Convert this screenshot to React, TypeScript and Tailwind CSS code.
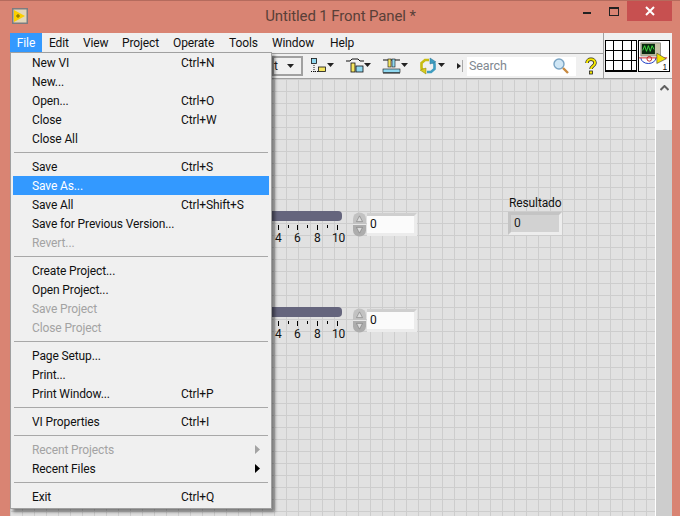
const menuFont = "font-['Roboto',sans-serif] tracking-[-0.12px]";

type Entry =
  | { sep: true }
  | { label: string; shortcut?: string; disabled?: boolean; active?: boolean; arrow?: boolean };

const entries: Entry[] = [
  { label: "New VI", shortcut: "Ctrl+N" },
  { label: "New..." },
  { label: "Open...", shortcut: "Ctrl+O" },
  { label: "Close", shortcut: "Ctrl+W" },
  { label: "Close All" },
  { sep: true },
  { label: "Save", shortcut: "Ctrl+S" },
  { label: "Save As...", active: true },
  { label: "Save All", shortcut: "Ctrl+Shift+S" },
  { label: "Save for Previous Version..." },
  { label: "Revert...", disabled: true },
  { sep: true },
  { label: "Create Project..." },
  { label: "Open Project..." },
  { label: "Save Project", disabled: true },
  { label: "Close Project", disabled: true },
  { sep: true },
  { label: "Page Setup..." },
  { label: "Print..." },
  { label: "Print Window...", shortcut: "Ctrl+P" },
  { sep: true },
  { label: "VI Properties", shortcut: "Ctrl+I" },
  { sep: true },
  { label: "Recent Projects", disabled: true, arrow: true },
  { label: "Recent Files", arrow: true },
  { sep: true },
  { label: "Exit", shortcut: "Ctrl+Q" },
];

function FileMenu() {
  return (
    <div className="absolute left-[10px] top-[51px] z-20 w-[262px] h-[457px] bg-[#f0f0f0] border border-[#a0a0a0] shadow-[3px_3px_3px_rgba(0,0,0,0.45)] px-[2px]">
      {entries.map((e, i) =>
        "sep" in e ? (
          <div key={i} className="h-[9px] flex items-center px-px">
            <div className="h-px w-full bg-[#a8a8a8]" />
          </div>
        ) : (
          <div
            key={i}
            className={`relative h-[19px] flex items-center text-[12px] leading-none ${
              e.active ? "bg-[#3399ff] text-white" : e.disabled ? "text-[#a3a3a3]" : "text-[#111]"
            }`}
          >
            <span className="w-[168px] pl-[19px] whitespace-nowrap">{e.label}</span>
            <span className="whitespace-nowrap">{e.shortcut}</span>
            {e.arrow && (
              <svg width="5" height="9" viewBox="0 0 5 9" className="absolute left-[242px] top-[5px]">
                <path d="M0 0 L5 4.5 L0 9 Z" fill={e.disabled ? "#a3a3a3" : "#000"} />
              </svg>
            )}
          </div>
        )
      )}
    </div>
  );
}

function Slider({ top }: { top: number }) {
  const ticks = [278, 288, 297, 307, 317, 327, 337];
  return (
    <div className="absolute left-0 w-full" style={{ top }}>
      <div className="absolute left-[272px] top-[0px] h-[10px] w-[70px] rounded-r-[4px] bg-[#65657d]" />
      {ticks.map((x, i) => (
        <div
          key={x}
          className="absolute w-px bg-black"
          style={{ left: x, top: 14, height: i % 2 === 0 ? 5 : 3 }}
        />
      ))}
      {[
        ["4", 275],
        ["6", 294],
        ["8", 314],
        ["10", 332],
      ].map(([t, x]) => (
        <span key={t} className="absolute top-[19px] text-[12px] leading-[16px] text-[#111]" style={{ left: x as number }}>
          {t}
        </span>
      ))}
      <svg width="13" height="25" viewBox="0 0 13 26" preserveAspectRatio="none" className="absolute left-[353px] top-[1px]">
        <path d="M0 7 A6.5 6.5 0 0 1 13 7 V13 H0 Z" fill="#c2c2c2" />
        <path d="M0 13 H13 V19 A6.5 6.5 0 0 1 0 19 Z" fill="#adadad" />
        <path d="M0 13 H13" stroke="#e8e8e8" />
        <path d="M6.5 4 L9.5 10 H3.5 Z" fill="#dcdcdc" stroke="#777" strokeWidth="0.6" />
        <path d="M6.5 22 L9.5 16 H3.5 Z" fill="#dcdcdc" stroke="#777" strokeWidth="0.6" />
      </svg>
      <div className="absolute left-[367px] top-[2px] h-[23px] w-[50px] border-t-[3px] border-r-[3px] border-b-[3px] border-t-[#cfcfcf] border-r-[#ececec] border-b-[#ececec] bg-[#fbfbfb] pl-[3px] text-[12px] leading-[17px] text-[#111]">
        0
      </div>
    </div>
  );
}

function Icon({ children, w = 30 }: { children: React.ReactNode; w?: number }) {
  return (
    <svg width={w} height="20" viewBox={`0 0 ${w} 20`} className="shrink-0">
      {children}
    </svg>
  );
}

const Caret = ({ x }: { x: number }) => <path d={`M${x} 7 h7 l-3.5 4 Z`} fill="#222" />;

export default function App() {
  return (
    <div className={`relative w-[680px] h-[516px] overflow-hidden bg-[#d98473] border-t border-[#b56b5d] ${menuFont}`}>
      {/* title bar */}
      <div className="relative h-[32px] flex items-center justify-center">
        <svg width="16" height="16" viewBox="0 0 16 16" className="absolute left-[12px] top-[7px]">
          <rect x="0.75" y="0.75" width="14.5" height="14.5" fill="#e4d6b8" stroke="#7c7c80" strokeWidth="1.5" />
          <path d="M2 2 L13 8 L2 14 Z" fill="#fbcf00" />
          <path d="M4 8 h4 M6 6 v4" stroke="#7a6400" />
        </svg>
        <span className="ml-[1px] mt-[-1px] text-[15px] text-[#5a4038] whitespace-nowrap">Untitled 1 Front Panel *</span>
        <div className="absolute left-[583px] top-[-1px] flex items-start">
          <div className="w-[8px] mr-[18px] mt-[12px] h-[2px] bg-[#222]" />
          <div className="w-[10px] h-[9px] mt-[7px] mr-[8px] border border-[#222] border-t-[2px]" />
          <div className="w-[45px] h-[21px] bg-[#c75050] flex items-center justify-center">
            <svg width="10" height="10" viewBox="0 0 10 10">
              <path d="M1 1 L9 9 M9 1 L1 9" stroke="#fff" strokeWidth="2" />
            </svg>
          </div>
        </div>
      </div>

      {/* window body */}
      <div className="ml-[10px] w-[662px] h-[483px] flex flex-col bg-[#f0f0f0]">
        <div className="flex h-[46px] border-b border-[#a0a0a0]">
          <div className="flex-1 min-w-0 flex flex-col">
            <div className="h-[21px] flex items-center text-[12px] text-[#111] border-b border-[#a0a0a0] pb-px">
              <span className="w-[32px] h-[19px] bg-[#3399ff] text-white flex items-center justify-center mr-[7px]">File</span>
              <span className="w-[34px]">Edit</span>
              <span className="w-[39px]">View</span>
              <span className="w-[51px]">Project</span>
              <span className="w-[56px]">Operate</span>
              <span className="w-[43px]">Tools</span>
              <span className="w-[58px]">Window</span>
              <span>Help</span>
            </div>
            <div className="flex-1 flex items-center pl-[262px]">
              <div className="w-[31px] h-[20px] border-2 border-[#a0a0a0] flex items-center text-[12px] text-[#222] justify-between pr-[7px]">
                <span>t</span>
                <svg width="7" height="4" viewBox="0 0 7 4"><path d="M0 0 h7 l-3.5 4 Z" fill="#222" /></svg>
              </div>
              <div className="ml-[8px]">
                <Icon w={24}>
                  <rect x="0.5" y="2.5" width="5" height="5" fill="#8fd8f0" stroke="#111" strokeWidth="0.8" />
                  <rect x="7.5" y="11" width="7" height="4.5" fill="#f5e560" stroke="#111" strokeWidth="0.8" />
                  <path d="M0 15.5 h7 M3 9 v8" stroke="#111" strokeWidth="1" strokeDasharray="1 1" />
                  <Caret x={16} />
                </Icon>
              </div>
              <div className="ml-[11px]">
                <Icon w={26}>
                  <path d="M0 5 h4 l2 -2 h6 l2 2 h4" stroke="#111" fill="none" />
                  <rect x="5" y="7" width="4" height="9" fill="#f5e560" stroke="#111" strokeWidth="0.8" />
                  <rect x="10" y="10" width="7" height="6" fill="#8fd8f0" stroke="#111" strokeWidth="0.8" />
                  <Caret x={18} />
                </Icon>
              </div>
              <div className="ml-[10px]">
                <Icon w={26}>
                  <path d="M1 4 h17 M1 17 h17" stroke="#111" />
                  <rect x="1" y="13" width="17" height="3.5" fill="#8fd8f0" stroke="#111" strokeWidth="0.6" />
                  <rect x="6" y="3" width="3" height="8" fill="#f5e560" stroke="#111" strokeWidth="0.6" />
                  <rect x="10" y="3" width="3" height="8" fill="#8fd8f0" stroke="#111" strokeWidth="0.6" />
                  <Caret x={19} />
                </Icon>
              </div>
              <div className="ml-[11px]">
                <Icon w={27}>
                  <path d="M10 4 H6 L2.5 7 V12 L5 15" fill="none" stroke="#c8bc10" strokeWidth="2.6" />
                  <path d="M1 14 L7 12 L7 18 Z" fill="#d8cc20" stroke="#8a8000" strokeWidth="0.5" />
                  <path d="M8 16 H12 L15.5 13 V8 L13 5" fill="none" stroke="#3f9dc0" strokeWidth="2.6" />
                  <path d="M17 6 L11 8 L11 2 Z" fill="#3f9dc0" stroke="#2a7090" strokeWidth="0.5" />
                  <Caret x={19} />
                </Icon>
              </div>
              <svg width="4" height="6" viewBox="0 0 4 6" className="ml-[11px]"><path d="M0 0 L4 3 L0 6 Z" fill="#222" /></svg>
              <div className="ml-[1px] w-px h-[12px] bg-[#aaa]" />
              <div className="ml-[4px] w-[109px] h-[19px] bg-white flex items-center text-[12.5px] text-[#808890] pl-[2px] relative">
                Search
                <svg width="18" height="18" viewBox="0 0 18 18" className="absolute right-[6px] top-0">
                  <circle cx="7" cy="7" r="5" fill="#cfe6f5" stroke="#7aa4c4" strokeWidth="1.4" />
                  <path d="M11 11 L16 16" stroke="#c88a40" strokeWidth="2.4" />
                </svg>
              </div>
              <svg width="14" height="18" viewBox="0 0 14 18" className="ml-[8px]">
                <path d="M3 6 C3 1 11 1 11 6 C11 9 7 9 7 12" fill="none" stroke="#222" strokeWidth="3.4" />
                <path d="M3 6 C3 1 11 1 11 6 C11 9 7 9 7 12" fill="none" stroke="#f5e800" strokeWidth="2" />
                <rect x="5.5" y="14" width="3" height="3" fill="#f5e800" stroke="#222" strokeWidth="0.8" />
              </svg>
            </div>
          </div>
          {/* connector pane and VI icon */}
          <div className="w-[69px] border-l border-[#a0a0a0] flex items-center gap-[1px] pl-[1px]">
            <div className="w-[32px] h-[32px] border border-black grid grid-cols-[7px_8px_8px_1fr] grid-rows-[repeat(3,1fr)] gap-px bg-black">
              {Array.from({ length: 12 }).map((_, i) => (
                <div key={i} className="bg-white" />
              ))}
            </div>
            <svg width="32" height="32" viewBox="0 0 32 32" className="border border-black bg-white">
              <rect x="2" y="2" width="21" height="14" fill="#c8c4a8" stroke="#666" strokeWidth="0.6" />
              <rect x="3" y="3" width="14" height="11" fill="#0a2a10" />
              <path d="M4 10 L6 5 L8 11 L10 5 L12 11 L14 5 L16 9" fill="none" stroke="#40e040" />
              <path d="M2 18 A8 6 0 0 0 18 18" fill="none" stroke="#1030c0" />
              <circle cx="11" cy="19" r="2.5" fill="none" stroke="#c02020" />
              <path d="M0 18 H30" stroke="#d02020" />
              <path d="M19 13 L29 19 L19 24 Z" fill="#f0e000" stroke="#333" strokeWidth="0.6" />
              <text x="25" y="31" fontSize="9" fill="#111" fontFamily="Liberation Sans">1</text>
            </svg>
          </div>
        </div>

        <div className="flex-1 flex min-h-0">
          {/* canvas */}
          <div className="flex-1 bg-[#e1e1e1] bg-[linear-gradient(#cdcdcd_1px,transparent_1px),linear-gradient(90deg,#cdcdcd_1px,transparent_1px)] bg-[size:12px_12px] bg-position-[0px_12px]" />
          {/* scrollbar */}
          <div className="w-[17px] flex flex-col bg-[#f0f0f0] border-l border-white">
            <div className="h-[17px] flex items-center justify-center">
              <svg width="9" height="6" viewBox="0 0 9 6">
                <path d="M0.5 5 L4.5 1 L8.5 5" fill="none" stroke="#606060" strokeWidth="2" />
              </svg>
            </div>
            <div className="flex-1 bg-[#cdcdcd] mt-[34px]" />
          </div>
        </div>
      </div>

      <Slider top={210} />
      <Slider top={306} />

      <div className="absolute left-[509px] top-[194px] text-[12px] leading-[16px] text-[#111]">Resultado</div>
      <div className="absolute left-[508px] top-[211px] h-[23px] w-[54px] border-[3px] border-t-[#c4c4c4] border-l-[#c4c4c4] border-r-[#ededed] border-b-[#ededed] bg-[#d2d2d2] pl-[3px] text-[12px] leading-[17px] text-[#222]">
        0
      </div>

      <FileMenu />
    </div>
  );
}
